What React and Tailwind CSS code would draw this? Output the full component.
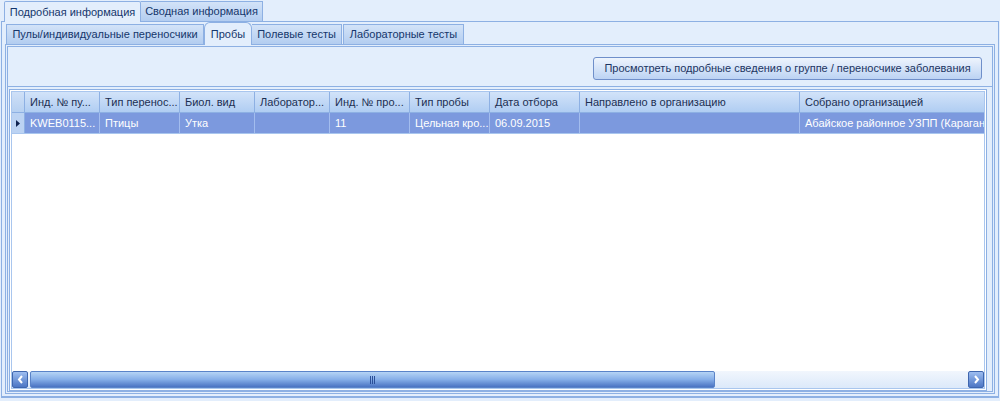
import React from "react";

const columns = [
    { title: "Инд. № пу...", w: 75, value: "KWEB0115..." },
    { title: "Тип перенос...", w: 80, value: "Птицы" },
    { title: "Биол. вид", w: 75, value: "Утка" },
    { title: "Лаборатор...", w: 75, value: "" },
    { title: "Инд. № про...", w: 80, value: "11" },
    { title: "Тип пробы", w: 80, value: "Цельная кро..." },
    { title: "Дата отбора", w: 90, value: "06.09.2015" },
    { title: "Направлено в организацию", w: 220, value: "" },
    { title: "Собрано организацией", w: 200, value: "Абайское районное УЗПП (Караганд" },
];

function Tab({ label, active, w, small }) {
    if (active) {
        return (
            <div
                className={`relative z-10 -mb-px flex items-center justify-center border border-b-0 border-[#8db0e3] bg-[#e3eefc] text-[#15366b] ${small ? "h-[23px] rounded-t-[6px]" : "h-[21px] rounded-t-[2px]"}`}
                style={{ width: w }}
            >
                {label}
            </div>
        );
    }
    return (
        <div
            className="flex h-[20px] items-center justify-center border border-b-0 border-l-0 border-[#8db0e3] bg-gradient-to-b from-[#d3e3f8] to-[#b3cdf0] text-[#15366b]"
            style={{ width: w }}
        >
            {label}
        </div>
    );
}

function ScrollButton({ dir }) {
    return (
        <div className="flex h-[17px] w-[16px] items-center justify-center rounded-[2px] border border-[#3f66ae] bg-gradient-to-b from-[#9dbdf0] to-[#4d76c4]">
            <svg width="7" height="9" viewBox="0 0 7 9">
                {dir === "left" ? (
                    <path d="M5 1 L2 4.5 L5 8" stroke="white" strokeWidth="2" fill="none" />
                ) : (
                    <path d="M2 1 L5 4.5 L2 8" stroke="white" strokeWidth="2" fill="none" />
                )}
            </svg>
        </div>
    );
}

export default function App() {
    return (
        <div className="flex h-[401px] w-[1000px] flex-col overflow-hidden bg-[#e3eefc] pt-[1px] font-['Liberation_Sans',Arial,sans-serif] text-[11px]">
            {/* верхние вкладки */}
            <div className="flex items-end pl-[4px]">
                <Tab label="Подробная информация" active w={137} />
                <Tab label="Сводная информация" w={122} />
            </div>

            <div className="mx-[1px] flex h-[377px] flex-col border border-b-2 border-[#8db0e3] bg-[#e3eefc] px-[2px]">
                {/* вложенные вкладки */}
                <div className="flex items-end pl-[2px]">
                    <div className="flex h-[20px] w-[198px] items-center justify-center border border-b-0 border-[#8db0e3] bg-gradient-to-b from-[#d3e3f8] to-[#b3cdf0] text-[#15366b]">
                        Пулы/индивидуальные переносчики
                    </div>
                    <Tab label="Пробы" active small w={48} />
                    <Tab label="Полевые тесты" w={90} />
                    <div className="w-[1px]" />
                    <div className="flex h-[20px] w-[121px] items-center justify-center border border-b-0 border-[#8db0e3] bg-gradient-to-b from-[#d3e3f8] to-[#b3cdf0] text-[#15366b]">
                        Лабораторные тесты
                    </div>
                </div>

                <div className="ml-[1px] mr-[1px] flex flex-1 flex-col border border-[#8db0e3] p-[1px]">
                    <div className="flex flex-1 flex-col border border-[#8db0e3] bg-[#e3eefc]">
                        <div className="flex h-[40px] items-center justify-end border-b border-[#8db0e3] pr-[10px] pt-[4px]">
                            <button className="h-[23px] w-[389px] rounded-[3px] border border-[#6f8fca] bg-gradient-to-b from-[#eef4fd] to-[#bcd3f3] text-[11px] text-[#1c3461]">
                                Просмотреть подробные сведения о группе / переносчике заболевания
                            </button>
                        </div>

                        <div className="flex flex-1 flex-col px-[1px] pt-[2px]">
                            <div className="mr-[4px] flex flex-1 flex-col border border-[#8db0e3] bg-white p-[1px]">
                                <div className="flex flex-1 flex-col border border-[#a9c6ee]">
                                    {/* шапка таблицы */}
                                    <div className="flex h-[21px] overflow-hidden border-b border-[#8db0e3] bg-gradient-to-b from-[#d2e3f9] to-[#b0cdf2]">
                                        <div className="w-[13px] shrink-0 border-r border-[#8db0e3] bg-gradient-to-b from-[#cfe0f7] to-[#b6d0f1]" />
                                        {columns.map((c) => (
                                            <div
                                                key={c.title}
                                                className="flex shrink-0 items-center overflow-hidden whitespace-nowrap border-r border-[#8db0e3] pl-[5px] text-[#1c2f52]"
                                                style={{ width: c.w }}
                                            >
                                                {c.title}
                                            </div>
                                        ))}
                                    </div>
                                    {/* выбранная строка */}
                                    <div className="flex h-[21px] overflow-hidden border-b border-[#a9c6ee]">
                                        <div className="flex w-[13px] shrink-0 items-center justify-center border-r border-[#8db0e3] bg-[#bcd3f3]">
                                            <svg width="4" height="7" viewBox="0 0 4 7">
                                                <path d="M0 0 L4 3.5 L0 7 Z" fill="#0f2350" />
                                            </svg>
                                        </div>
                                        {columns.map((c) => (
                                            <div
                                                key={c.title}
                                                className="flex shrink-0 items-center overflow-hidden whitespace-nowrap border-r border-[#a3bdee] bg-[#7c99de] pl-[5px] text-white"
                                                style={{ width: c.w }}
                                            >
                                                {c.value}
                                            </div>
                                        ))}
                                    </div>
                                    <div className="flex-1" />
                                    {/* горизонтальная прокрутка */}
                                    <div className="flex h-[17px] items-center bg-gradient-to-b from-[#f1f6fd] to-[#dce9fa]">
                                        <ScrollButton dir="left" />
                                        <div className="ml-[2px] flex h-[17px] w-[685px] items-center justify-center rounded-[2px] border border-[#5a83c8] bg-gradient-to-b from-[#b6d4f5] via-[#86aee8] to-[#4b73c2]">
                                            <div className="flex gap-[1px]">
                                                <div className="h-[8px] w-[1px] bg-[#2b4f98]" />
                                                <div className="h-[8px] w-[1px] bg-[#2b4f98]" />
                                                <div className="h-[8px] w-[1px] bg-[#2b4f98]" />
                                            </div>
                                        </div>
                                        <div className="flex-1" />
                                        <ScrollButton dir="right" />
                                    </div>
                                </div>
                            </div>
                        </div>
                    </div>
                </div>
                <div className="h-[2px]" />
            </div>
        </div>
    );
}
